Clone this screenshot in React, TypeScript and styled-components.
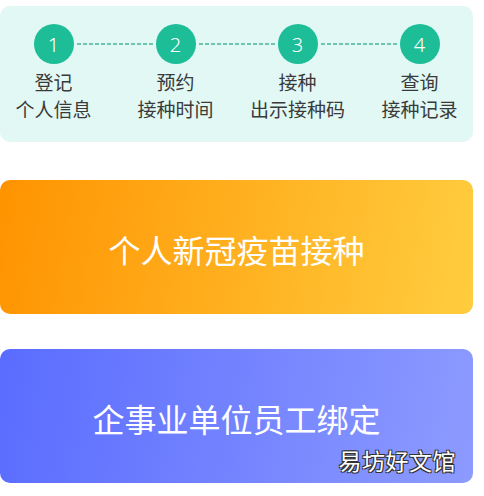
import React from "react";
import styled, { createGlobalStyle } from "styled-components";

const GlobalStyle = createGlobalStyle`
  html, body {
    margin: 0;
    padding: 0;
    background: #ffffff;
  }
  body {
    font-family: "Noto Sans CJK SC", "Noto Sans", sans-serif;
  }
`;

const Page = styled.div`
  width: 484px;
  height: 496px;
  padding-top: 6px;
  box-sizing: border-box;
  overflow: hidden;
  display: flex;
  flex-direction: column;
`;

const StepsCard = styled.div`
  width: 473px;
  height: 136px;
  box-sizing: border-box;
  background: #e1f8f4;
  border-radius: 10px;
  padding-top: 18px;
  display: grid;
  grid-template-columns: repeat(4, 122px);
  justify-content: center;
`;

const Step = styled.div`
  position: relative;
  display: flex;
  flex-direction: column;
  align-items: center;
`;

const Connector = styled.div`
  position: absolute;
  top: 19px;
  left: calc(50% + 23px);
  width: 77px;
  height: 1.5px;
  background: repeating-linear-gradient(
    90deg,
    #6fc5b1 0 4px,
    transparent 4px 6px
  );
`;

const Circle = styled.div`
  width: 40px;
  height: 40px;
  border-radius: 50%;
  background: #1dbd98;
  color: #ffffff;
  display: flex;
  align-items: center;
  justify-content: center;
  font-family: "Noto Sans", sans-serif;
  font-size: 20px;
  font-weight: 300;
`;

const Label = styled.div`
  margin-top: 4px;
  font-size: 19px;
  line-height: 27px;
  color: #3a3a3a;
  text-align: center;
  white-space: nowrap;
`;

const ActionCard = styled.div<{ $from: string; $to: string; $top: number }>`
  position: relative;
  margin-top: ${(p) => p.$top}px;
  width: 473px;
  height: 134px;
  border-radius: 10px;
  background: linear-gradient(100deg, ${(p) => p.$from}, ${(p) => p.$to});
  display: flex;
  align-items: center;
  justify-content: center;
  color: #ffffff;
  font-size: 32px;
  padding-top: 3px;
  box-sizing: border-box;
`;

const Watermark = styled.span`
  position: absolute;
  right: 17px;
  bottom: 6px;
  font-size: 23px;
  color: #ffffff;
  letter-spacing: 0.5px;
  text-shadow: -1px -1px 0 #333, 1px -1px 0 #333, -1px 1px 0 #333,
    1px 1px 0 #333;
`;

const steps = [
  ["登记", "个人信息"],
  ["预约", "接种时间"],
  ["接种", "出示接种码"],
  ["查询", "接种记录"],
];

export default function App() {
  return (
    <>
      <GlobalStyle />
      <Page>
        <StepsCard>
          {steps.map(([a, b], i) => (
            <Step key={i}>
              {i < steps.length - 1 && <Connector />}
              <Circle>{i + 1}</Circle>
              <Label>
                {a}
                <br />
                {b}
              </Label>
            </Step>
          ))}
        </StepsCard>
        <ActionCard $from="#ff9300" $to="#ffcd3f" $top={38}>
          个人新冠疫苗接种
        </ActionCard>
        <ActionCard $from="#5a6cff" $to="#8d9bff" $top={35}>
          企事业单位员工绑定
          <Watermark>易坊好文馆</Watermark>
        </ActionCard>
      </Page>
    </>
  );
}
